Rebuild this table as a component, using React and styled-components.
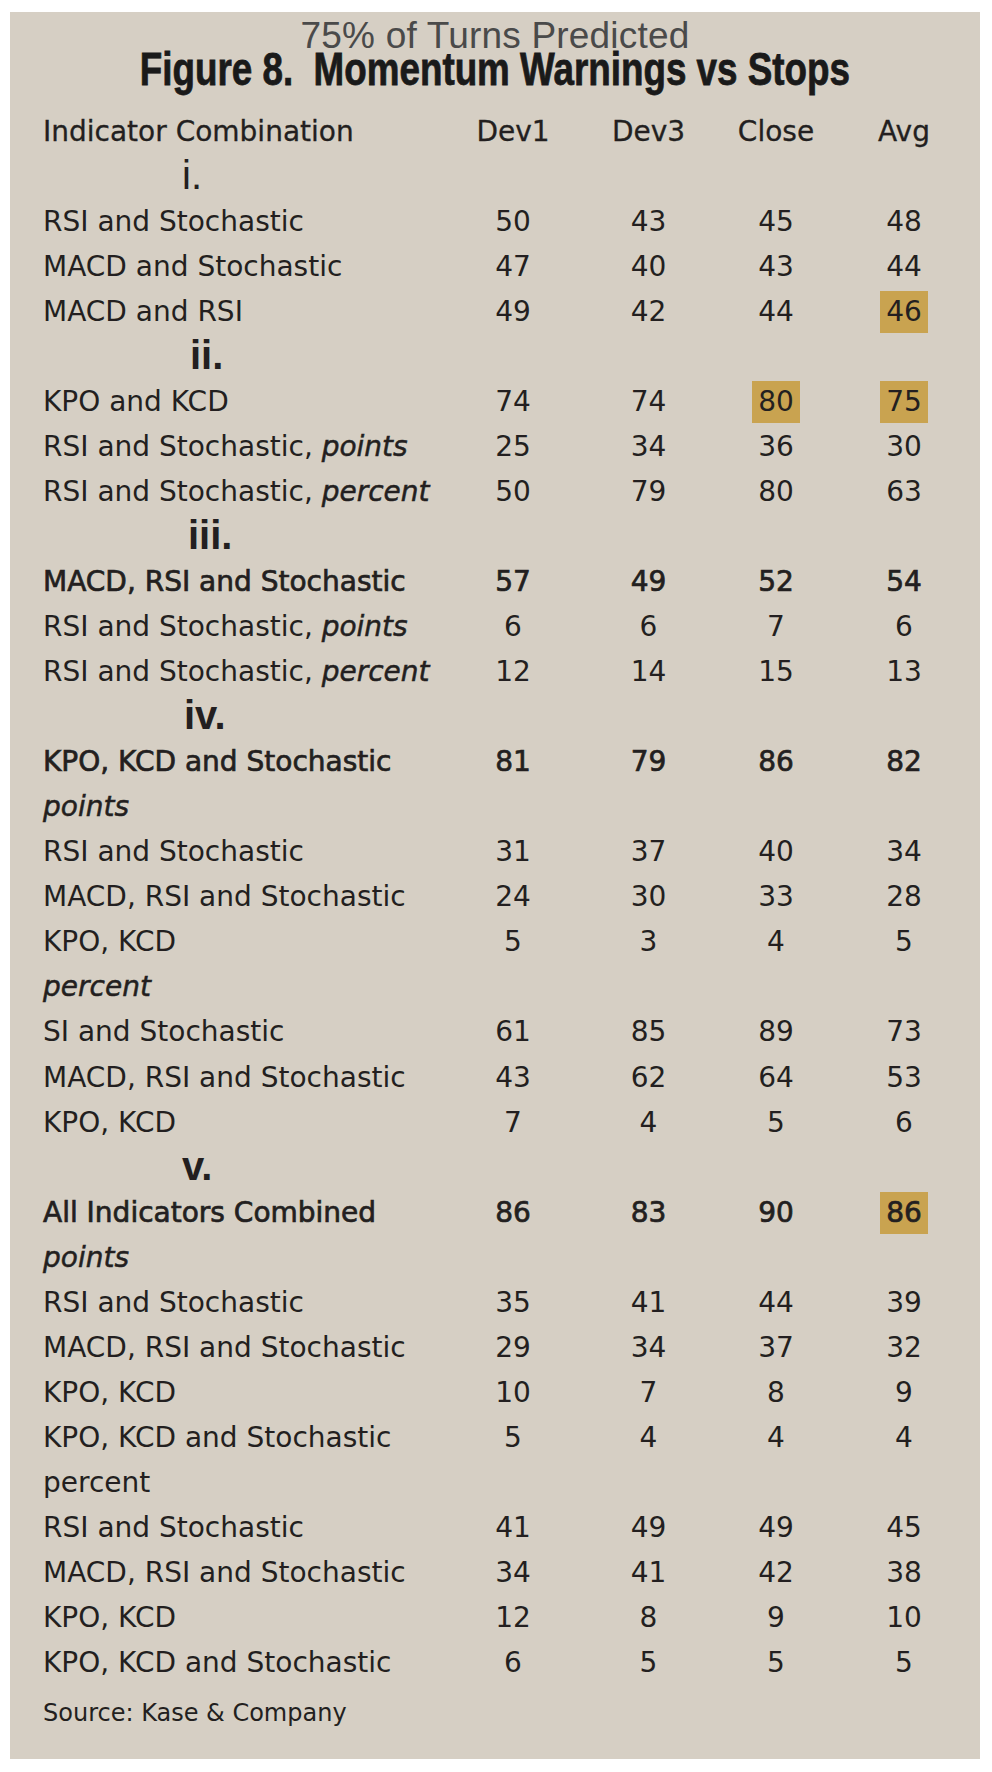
import React from "react";
import styled, { createGlobalStyle } from "styled-components";

const GlobalStyle = createGlobalStyle`
  html, body {
    margin: 0;
    padding: 0;
    background: #ffffff;
  }
  body {
    font-family: "DejaVu Sans", "Open Sans", sans-serif;
  }
`;

const Panel = styled.div`
  box-sizing: border-box;
  width: 970px;
  height: 1747px;
  margin: 12px 0 0 10px;
  padding-top: 9px;
  background: #d6cfc4;
  color: #231f20;
`;

const Subtitle = styled.div`
  font-family: "Liberation Sans", Arial, sans-serif;
  font-size: 37px;
  line-height: 30px;
  letter-spacing: 0.2px;
  color: #4a4a4a;
  text-align: center;
`;

const Title = styled.h1`
  margin: 1px 0 0;
  text-align: center;
  font-family: "Liberation Sans", Arial, sans-serif;
  font-weight: 700;
  font-size: 46px;
  line-height: 34px;
  color: #1a1a1a;
`;

const TitleText = styled.span`
  display: inline-block;
  white-space: pre;
  transform: scaleX(0.8);
  -webkit-text-stroke: 0.8px #1a1a1a;
`;

const Table = styled.div`
  margin-top: 22.5px;
  padding-left: 33px;
  font-size: 28px;
`;

const Row = styled.div`
  display: grid;
  grid-template-columns: 406px 128px 143px 112px 144px;
  height: 45.06px;
  align-items: center;
  line-height: 45px;
  ${(p) => (p.$bold ? "-webkit-text-stroke: 0.7px #231f20;" : "")}
  ${(p) => (p.$head ? "-webkit-text-stroke: 0.3px #231f20;" : "")}
`;

const Label = styled.div`
  white-space: nowrap;
`;

const Em = styled.span`
  font-style: italic;
  -webkit-text-stroke: 0.5px #231f20;
`;

const Roman = styled.div`
  grid-column: 1 / -1;
  padding-left: ${(p) => p.$indent}px;
  font-family: "Liberation Sans", Arial, sans-serif;
  font-size: 40px;
  font-weight: ${(p) => (p.$light ? 400 : 700)};
  line-height: 45px;
  transform: translateY(-1px);
`;

const Cell = styled.div`
  text-align: center;
`;

const Value = styled.span`
  display: inline-block;
  padding: 0 6px;
  line-height: 42px;
  background: ${(p) => (p.$hi ? "#c9a350" : "transparent")};
`;

const Source = styled.div`
  margin-top: 13px;
  padding-left: 33px;
  font-size: 24px;
  line-height: 30px;
`;

const rows = [
  { roman: "i.", indent: 139, light: true },
  { label: "RSI and Stochastic", v: [50, 43, 45, 48] },
  { label: "MACD and Stochastic", v: [47, 40, 43, 44] },
  { label: "MACD and RSI", v: [49, 42, 44, 46], hi: [3] },
  { roman: "ii.", indent: 147 },
  { label: "KPO and KCD", v: [74, 74, 80, 75], hi: [2, 3] },
  { label: "RSI and Stochastic, ", em: "points", v: [25, 34, 36, 30] },
  { label: "RSI and Stochastic, ", em: "percent", v: [50, 79, 80, 63] },
  { roman: "iii.", indent: 145 },
  { label: "MACD, RSI and Stochastic", bold: true, v: [57, 49, 52, 54] },
  { label: "RSI and Stochastic, ", em: "points", v: [6, 6, 7, 6] },
  { label: "RSI and Stochastic, ", em: "percent", v: [12, 14, 15, 13] },
  { roman: "iv.", indent: 141 },
  { label: "KPO, KCD and Stochastic", bold: true, v: [81, 79, 86, 82] },
  { em: "points" },
  { label: "RSI and Stochastic", v: [31, 37, 40, 34] },
  { label: "MACD, RSI and Stochastic", v: [24, 30, 33, 28] },
  { label: "KPO, KCD", v: [5, 3, 4, 5] },
  { em: "percent" },
  { label: "SI and Stochastic", v: [61, 85, 89, 73] },
  { label: "MACD, RSI and Stochastic", v: [43, 62, 64, 53] },
  { label: "KPO, KCD", v: [7, 4, 5, 6] },
  { roman: "v.", indent: 139 },
  { label: "All Indicators Combined", bold: true, v: [86, 83, 90, 86], hi: [3] },
  { em: "points" },
  { label: "RSI and Stochastic", v: [35, 41, 44, 39] },
  { label: "MACD, RSI and Stochastic", v: [29, 34, 37, 32] },
  { label: "KPO, KCD", v: [10, 7, 8, 9] },
  { label: "KPO, KCD and Stochastic", v: [5, 4, 4, 4] },
  { label: "percent" },
  { label: "RSI and Stochastic", v: [41, 49, 49, 45] },
  { label: "MACD, RSI and Stochastic", v: [34, 41, 42, 38] },
  { label: "KPO, KCD", v: [12, 8, 9, 10] },
  { label: "KPO, KCD and Stochastic", v: [6, 5, 5, 5] },
];

function App() {
  return (
    <>
      <GlobalStyle />
      <Panel>
        <Subtitle>75% of Turns Predicted</Subtitle>
        <Title>
          <TitleText>{"Figure 8.  Momentum Warnings vs Stops"}</TitleText>
        </Title>

        <Table>
          <Row $head>
            <Label>Indicator Combination</Label>
            <Cell>Dev1</Cell>
            <Cell>Dev3</Cell>
            <Cell>Close</Cell>
            <Cell>Avg</Cell>
          </Row>

          {rows.map((r, i) =>
            r.roman ? (
              <Row key={i}>
                <Roman $indent={r.indent} $light={r.light}>
                  {r.roman}
                </Roman>
              </Row>
            ) : (
              <Row key={i} $bold={r.bold}>
                <Label>
                  {r.label}
                  {r.em && <Em>{r.em}</Em>}
                </Label>
                {(r.v || []).map((n, j) => (
                  <Cell key={j}>
                    <Value $hi={r.hi && r.hi.includes(j)}>{n}</Value>
                  </Cell>
                ))}
              </Row>
            )
          )}
        </Table>

        <Source>Source: Kase &amp; Company</Source>
      </Panel>
    </>
  );
}

export default App;
